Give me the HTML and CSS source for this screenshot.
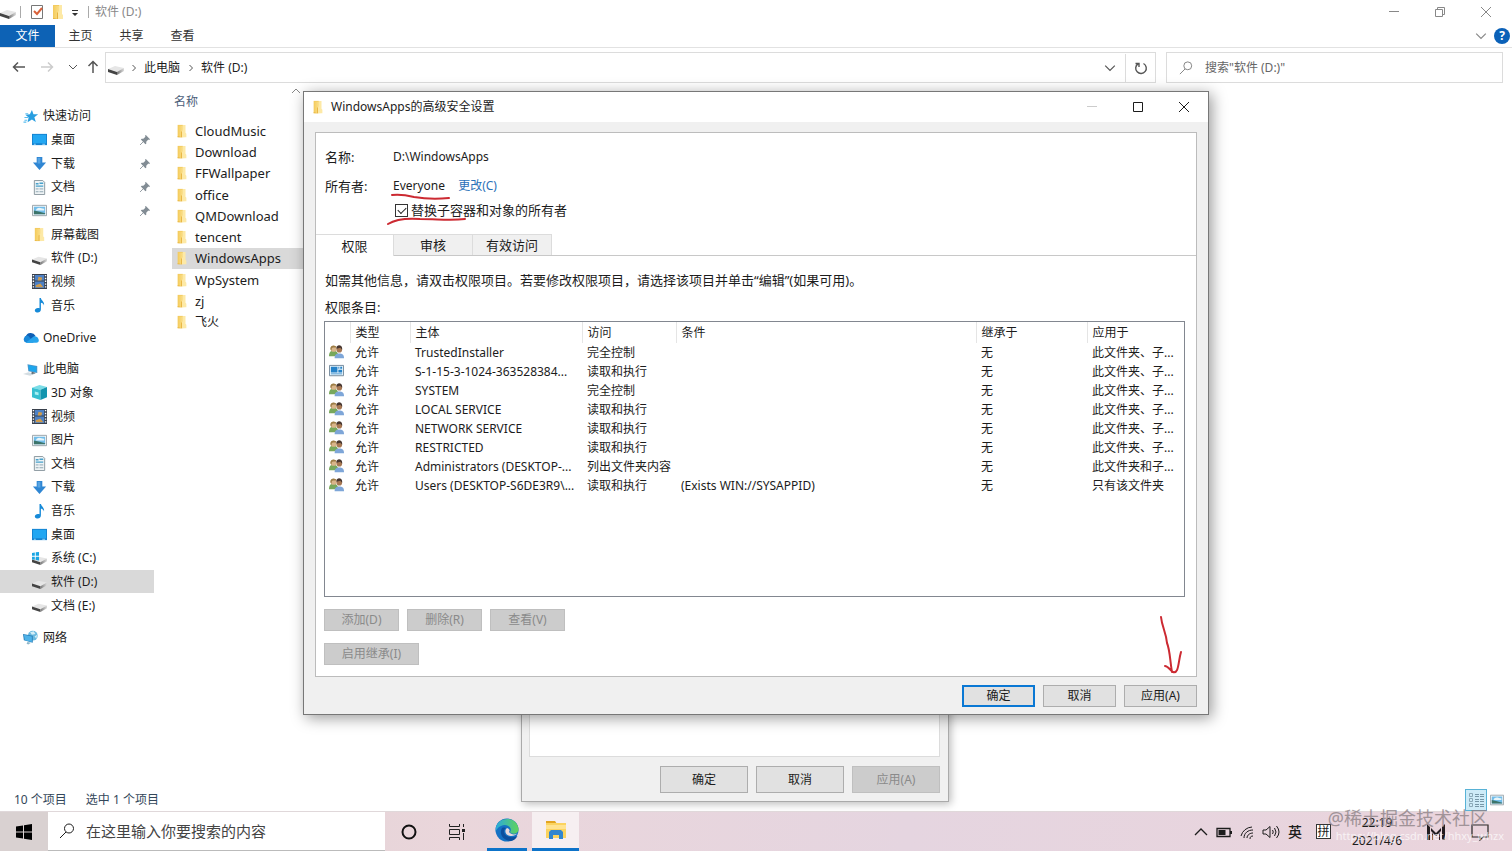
FILE: index.html
```html
<!DOCTYPE html>
<html lang="zh-CN">
<head>
<meta charset="utf-8">
<title>软件 (D:)</title>
<link rel="stylesheet" href="styles.css">
</head>
<body>
<svg class="sprite" aria-hidden="true">
  <defs>
    <linearGradient id="g-folder" x1="0" x2="1"><stop offset="0" stop-color="#f6cf62"/><stop offset="1" stop-color="#fbe49a"/></linearGradient>
    <linearGradient id="g-drive" x1="0" x2="1"><stop offset="0" stop-color="#777"/><stop offset="1" stop-color="#ddd"/></linearGradient>
    <linearGradient id="g-edge" x1="0" y1="0" x2="1" y2="0"><stop offset="0" stop-color="#2aa9dd"/><stop offset="1" stop-color="#5fd45a"/></linearGradient>
  </defs>
  <symbol id="folder" viewBox="0 0 16 16"><path fill="#f3cb60" d="M3 1h6v14H3z"/><path fill="url(#g-folder)" d="M4 2h7v13H4z"/><path fill="#fde9a6" d="M9 1h3v9l1 1v4H8V8l1-1z"/><path fill="#e6b23f" d="M3 14l5 1H3zM8 8v7H7V9z"/></symbol>
  <symbol id="drive" viewBox="0 0 16 16"><path fill="#e6e6e6" d="M0 9l7-3 9 2-6 4z"/><path fill="#444" d="M0 9l9 3v3l-9-3z"/><path fill="url(#g-drive)" d="M9 12l7-4v3l-7 4z"/></symbol>
  <symbol id="drivec" viewBox="0 0 16 16"><use href="#drive"/><path fill="#19a5e3" d="M0 2l3-.5V5H0zM4 1.300L7.500 1v4H4zM0 6h3v3.300L0 9zM4 6h3.500v4L4 9.500z"/></symbol>
  <symbol id="star" viewBox="0 0 16 16"><path fill="#289ee0" d="M9 1l1.600 4.500 5 .2-4 3.200 1.500 5L9 11.200 4.300 14l1.200-5L2 6l4.800-.3z"/><path stroke="#59bdf0" stroke-width="1.200" d="M1 9h4M1 12h3M0 14h3M2 5h3"/></symbol>
  <symbol id="desktop" viewBox="0 0 16 16"><path fill="#1583d0" d="M0 2h16v12H0z"/><path fill="#22a7f2" d="M1 3h14v9H1z"/><path fill="#9bd8fb" d="M2 12.500h2v1H2zM11 12.500h3v1h-3z"/></symbol>
  <symbol id="down" viewBox="0 0 16 16"><path fill="#2f86d3" d="M5 1h6v6h4l-7 8-7-8h4z"/><path fill="#57a4e3" d="M6 2h3v6H6z"/></symbol>
  <symbol id="doc" viewBox="0 0 16 16"><path fill="#eef3f5" stroke="#88959d" d="M2.500.5h9l2 2v13h-11z"/><path stroke="#48a2cc" stroke-width="1.500" d="M4 4h3M8 3.500h4M4 6.500h8"/><path stroke="#8da4b1" d="M4 9.500h3M8 9.500h4M4 12.500h3M8 12.500h4"/></symbol>
  <symbol id="picture" viewBox="0 0 16 16"><path fill="#f2f5f6" stroke="#97a2a9" d="M.5 2.500h15v11H.5z"/><path fill="#72bdea" d="M2 4h12v8H2z"/><path fill="#e7f5fa" d="M5 6c3-2 5 0 8 0v2H4z"/><path fill="#3c746a" d="M2 8l5 1 7 2v1H2z"/></symbol>
  <symbol id="video" viewBox="0 0 16 16"><path fill="#39404c" d="M0 0h16v16H0z"/><path fill="#4d81c6" d="M3 1h10v6H3zM3 8h10v7H3z"/><path fill="#cf9b4c" d="M7 3l4 1-1 3H6zM4 12l5-2 3 4H4z"/><path stroke="#fff" stroke-width="1.500" stroke-dasharray="1.500 1.500" d="M1.500 1v15M14.500 1v15"/></symbol>
  <symbol id="music" viewBox="0 0 16 16"><path fill="#168ad8" d="M8 0h1.500c.5 3 4 3.500 3.300 8-.5-2-1.700-3-3.300-3v7c0 5-6.500 4-6.500 1.200C3 11 6 10 8 11z"/></symbol>
  <symbol id="cloud" viewBox="0 0 18 14"><path fill="#0f5fb5" d="M3 6a6 6 0 0 1 11-1l-5 6H3z"/><path fill="#1987d8" d="M4 13a4 4 0 1 1 2-8l6 8z"/><path fill="#27a4ec" d="M3 13l9-7c4-2 9 6 3 7z"/></symbol>
  <symbol id="pc" viewBox="0 0 18 16"><path fill="#4e95c7" d="M5 2l11 2v8L6 10z"/><path fill="#1da6ed" d="M6 3l9 2v6l-8-2z"/><path fill="#d3dce1" d="M0 13l6-2 7 2-5 2z"/><path stroke="#81949f" d="M10 11v2l4-1"/></symbol>
  <symbol id="cube" viewBox="0 0 16 16"><path fill="#7bdde7" d="M0 3l8-3 8 2-7 3z"/><path fill="#36bfd0" d="M0 3l9 2v11l-9-3z"/><path fill="#1395ae" d="M9 5l7-3v11l-7 3z"/><path fill="#a8eff3" d="M3 7l4 1v3l-4-1z"/></symbol>
  <symbol id="network" viewBox="0 0 18 16"><circle cx="11" cy="6" r="5.500" fill="#69b9df"/><path fill="#d2edf7" d="M8 2l4-1 2 3-4 1zM13 7l3-2-1 4z"/><path fill="#257eb8" d="M0 4l11 2v8L1 11z"/><path fill="#4eb2e8" d="M1 5l9 2v6l-8-2z"/><path fill="#8eb7cb" d="M5 13l4 1-3 2-2-1z"/></symbol>
  <symbol id="pin" viewBox="0 0 12 12"><path fill="#828c94" d="M7 0l5 5-1 1-1-.5L7.500 8v2.500L6.500 11 1 5.500 2 4.500h2L6.500 2 6 1z"/><path stroke="#828c94" d="M0 12l4-4"/></symbol>
  <symbol id="users" viewBox="0 0 16 16"><path fill="#78a85c" d="M0 12c0-5 2-6 5-6s5 2 5 6z"/><circle cx="5" cy="4" r="3.300" fill="#d9b58a"/><path fill="#9d7e46" d="M1.500 4.500C1-.5 7-.5 8 2.500 6 3.500 4 1.500 3 3.500l-.5 3z"/><path fill="#7ea6d8" d="M6 14c0-4 2-5 5-5s5 1 5 5z"/><circle cx="11" cy="5" r="3" fill="#a87954"/><path fill="#46352e" d="M8 4c-1-5 7-5 6 1l-2-2z"/></symbol>
  <symbol id="app" viewBox="0 0 16 16"><path fill="#e8f4fb" stroke="#72889a" d="M.5 1.500h15v11H.5z"/><path fill="#2682c8" d="M2 3h7v6H2zM10 3h1v2h-1zM12 3h2v2h-2zM10 6h4v3h-4zM2 10h12v1H2z"/></symbol>
  <symbol id="search" viewBox="0 0 16 16"><circle cx="10" cy="5.500" r="4.500" fill="none" stroke="currentColor"/><path fill="none" stroke="currentColor" d="M7 9l-6 6"/></symbol>
  <symbol id="close" viewBox="0 0 12 12"><path fill="none" stroke="currentColor" d="M1 1l10 10M11 1L1 11"/></symbol>
  <symbol id="chev" viewBox="0 0 10 10"><path fill="none" stroke="currentColor" d="M1 3l4 4 4-4"/></symbol>
  <symbol id="right" viewBox="0 0 10 10"><path fill="none" stroke="#555" d="M3.500 2l3 3-3 3"/></symbol>
  <symbol id="arrow" viewBox="0 0 14 14"><path fill="none" stroke="currentColor" stroke-width="1.500" d="M13 7H2M6 2.500L1.500 7 6 11.500"/></symbol>
</svg>

<main class="explorer">
  <header class="titlebar">
    <svg class="i16"><use href="#drive"/></svg><span class="bar first"></span>
    <svg class="i16" viewBox="0 0 16 16"><path fill="#fff" stroke="#777" d="M2.500 1.500h11v13h-11z"/><path fill="none" stroke="#d9623b" stroke-width="2" d="M5 7l3 3 5-6"/></svg>
    <svg class="i16"><use href="#folder"/></svg>
    <svg class="i10" viewBox="0 0 10 10"><path fill="#333" d="M2 3h6v1H2zM2 6h6L5 9z"/></svg>
    <span class="bar"></span><span>软件 (D:)</span>
    <div class="controls">
      <button aria-label="最小化"><svg class="i10" viewBox="0 0 10 10"><path stroke="currentColor" d="M0 4.500h10"/></svg></button>
      <button aria-label="还原"><svg class="i10" viewBox="0 0 10 10"><path fill="none" stroke="currentColor" d="M.5 2.500h7v7h-7zM2.500 2.500v-2h7v7h-2"/></svg></button>
      <button aria-label="关闭"><svg class="i12"><use href="#close"/></svg></button>
    </div>
  </header>
  <nav class="ribbon">
    <button class="file">文件</button><button>主页</button><button>共享</button><button>查看</button>
    <div class="ribbon-end"><svg class="i12"><use href="#chev"/></svg><button class="help" aria-label="帮助">?</button></div>
  </nav>
  <div class="navbar">
    <div class="arrows">
      <button aria-label="后退"><svg class="i14"><use href="#arrow"/></svg></button>
      <button class="off" aria-label="前进"><svg class="i14 flip"><use href="#arrow"/></svg></button>
      <button aria-label="最近"><svg class="i10"><use href="#chev"/></svg></button>
      <button aria-label="向上"><svg class="i14 up"><use href="#arrow"/></svg></button>
    </div>
    <div class="address">
      <svg class="i16"><use href="#drive"/></svg><svg class="i10"><use href="#right"/></svg><span>此电脑</span><svg class="i10"><use href="#right"/></svg><span>软件 (D:)</span>
      <button class="drop" aria-label="历史"><svg class="i12"><use href="#chev"/></svg></button>
      <button class="refresh" aria-label="刷新"><svg class="i14" viewBox="0 0 14 14"><path fill="none" stroke="currentColor" stroke-width="1.400" d="M9.500 2.500a5.300 5.300 0 1 1-5.500.3M1.500 2.500h3.500V6"/></svg></button>
    </div>
    <label class="find"><svg class="i14"><use href="#search"/></svg><input type="text" aria-label="搜索" placeholder='搜索"软件 (D:)"'></label>
  </div>
  <div class="body">
    <aside class="tree">
      <ul class="g9">
        <li class="root"><svg><use href="#star"/></svg>快速访问</li>
        <li><svg><use href="#desktop"/></svg>桌面<svg class="pin"><use href="#pin"/></svg></li>
        <li><svg><use href="#down"/></svg>下载<svg class="pin"><use href="#pin"/></svg></li>
        <li><svg><use href="#doc"/></svg>文档<svg class="pin"><use href="#pin"/></svg></li>
        <li><svg><use href="#picture"/></svg>图片<svg class="pin"><use href="#pin"/></svg></li>
        <li><svg><use href="#folder"/></svg>屏幕截图</li>
        <li><svg><use href="#drive"/></svg>软件 (D:)</li>
        <li><svg><use href="#video"/></svg>视频</li>
        <li><svg><use href="#music"/></svg>音乐</li>
      </ul>
      <ul><li class="root"><svg><use href="#cloud"/></svg>OneDrive</li></ul>
      <ul class="g11">
        <li class="root"><svg><use href="#pc"/></svg>此电脑</li>
        <li><svg><use href="#cube"/></svg>3D 对象</li>
        <li><svg><use href="#video"/></svg>视频</li>
        <li><svg><use href="#picture"/></svg>图片</li>
        <li><svg><use href="#doc"/></svg>文档</li>
        <li><svg><use href="#down"/></svg>下载</li>
        <li><svg><use href="#music"/></svg>音乐</li>
        <li><svg><use href="#desktop"/></svg>桌面</li>
        <li><svg><use href="#drivec"/></svg>系统 (C:)</li>
        <li class="on"><svg><use href="#drive"/></svg>软件 (D:)</li>
        <li><svg><use href="#drive"/></svg>文档 (E:)</li>
      </ul>
      <ul><li class="root"><svg><use href="#network"/></svg>网络</li></ul>
    </aside>
    <section class="files">
      <div class="cols"><span>名称</span><svg class="i10 sort"><use href="#chev"/></svg></div>
      <ul>
        <li><svg><use href="#folder"/></svg>CloudMusic</li>
        <li><svg><use href="#folder"/></svg>Download</li>
        <li><svg><use href="#folder"/></svg>FFWallpaper</li>
        <li><svg><use href="#folder"/></svg>office</li>
        <li><svg><use href="#folder"/></svg>QMDownload</li>
        <li><svg><use href="#folder"/></svg>tencent</li>
        <li class="on"><svg><use href="#folder"/></svg>WindowsApps</li>
        <li><svg><use href="#folder"/></svg>WpSystem</li>
        <li><svg><use href="#folder"/></svg>zj</li>
        <li><svg><use href="#folder"/></svg>飞火</li>
      </ul>
    </section>
  </div>
  <footer class="status">
    <span>10 个项目</span><span>选中 1 个项目</span>
    <div class="views">
      <button class="on" aria-label="详细信息"><svg class="i16" viewBox="0 0 16 16"><path fill="none" stroke="#8aa9b8" d="M1.500 1.500h3v3h-3zM1.500 6.500h3v3h-3zM1.500 11.500h3v3h-3z"/><path stroke="#7797a8" stroke-dasharray="4 1" d="M7 2.500h9M7 4.500h9M7 7.500h9M7 9.500h9M7 12.500h9M7 14.500h9"/></svg></button>
      <button aria-label="缩略图"><svg class="i14"><use href="#picture"/></svg></button>
    </div>
  </footer>
</main>

<section class="props">
  <div class="sheet"></div>
  <div class="actions"><button>确定</button><button>取消</button><button disabled>应用(A)</button></div>
</section>

<section class="dialog" role="dialog" aria-labelledby="dlg-title">
  <header>
    <svg class="i14"><use href="#folder"/></svg><h1 id="dlg-title">WindowsApps的高级安全设置</h1>
    <div class="controls">
      <button class="off" aria-label="最小化"><svg class="i10" viewBox="0 0 10 10"><path stroke="currentColor" d="M0 4.500h10"/></svg></button>
      <button aria-label="最大化"><svg class="i10" viewBox="0 0 10 10"><path fill="none" stroke="currentColor" d="M.5.5h9v9h-9z"/></svg></button>
      <button aria-label="关闭"><svg class="i12"><use href="#close"/></svg></button>
    </div>
  </header>
  <div class="panel">
    <dl class="info">
      <dt>名称:</dt><dd>D:\WindowsApps</dd>
      <dt>所有者:</dt><dd>Everyone <a href="#">更改(C)</a></dd>
    </dl>
    <label class="check"><input type="checkbox" checked><span>替换子容器和对象的所有者</span></label>
    <div class="tabs" role="tablist"><button class="on" role="tab">权限</button><button role="tab">审核</button><button role="tab">有效访问</button></div>
    <div class="page">
      <p>如需其他信息，请双击权限项目。若要修改权限项目，请选择该项目并单击“编辑”(如果可用)。</p>
      <p class="lead">权限条目:</p>
      <div class="list">
        <table>
          <colgroup><col class="c0"><col class="c1"><col class="c2"><col class="c3"><col class="c4"><col class="c5"><col class="c6"></colgroup>
          <thead><tr><th></th><th>类型</th><th>主体</th><th>访问</th><th>条件</th><th>继承于</th><th>应用于</th></tr></thead>
          <tbody>
            <tr><td><svg><use href="#users"/></svg></td><td>允许</td><td>TrustedInstaller</td><td>完全控制</td><td></td><td>无</td><td>此文件夹、子...</td></tr>
            <tr><td><svg><use href="#app"/></svg></td><td>允许</td><td>S-1-15-3-1024-363528384...</td><td>读取和执行</td><td></td><td>无</td><td>此文件夹、子...</td></tr>
            <tr><td><svg><use href="#users"/></svg></td><td>允许</td><td>SYSTEM</td><td>完全控制</td><td></td><td>无</td><td>此文件夹、子...</td></tr>
            <tr><td><svg><use href="#users"/></svg></td><td>允许</td><td>LOCAL SERVICE</td><td>读取和执行</td><td></td><td>无</td><td>此文件夹、子...</td></tr>
            <tr><td><svg><use href="#users"/></svg></td><td>允许</td><td>NETWORK SERVICE</td><td>读取和执行</td><td></td><td>无</td><td>此文件夹、子...</td></tr>
            <tr><td><svg><use href="#users"/></svg></td><td>允许</td><td>RESTRICTED</td><td>读取和执行</td><td></td><td>无</td><td>此文件夹、子...</td></tr>
            <tr><td><svg><use href="#users"/></svg></td><td>允许</td><td>Administrators (DESKTOP-...</td><td>列出文件夹内容</td><td></td><td>无</td><td>此文件夹和子...</td></tr>
            <tr><td><svg><use href="#users"/></svg></td><td>允许</td><td>Users (DESKTOP-S6DE3R9\...</td><td>读取和执行</td><td>(Exists WIN://SYSAPPID)</td><td>无</td><td>只有该文件夹</td></tr>
          </tbody>
        </table>
      </div>
      <div class="row"><button disabled>添加(D)</button><button disabled>删除(R)</button><button disabled>查看(V)</button></div>
      <div class="row"><button class="wide" disabled>启用继承(I)</button></div>
    </div>
  </div>
  <div class="actions"><button class="primary">确定</button><button>取消</button><button>应用(A)</button></div>
  <svg class="ink marks" viewBox="0 0 84 34"><path d="M5 3c8-1 14 0 22 2 12 2 24 2 35 1M1 32c8-5 18-6 32-5 18 0 30 2 45 0"/></svg>
  <svg class="ink pointer" viewBox="0 0 26 60"><path d="M2 2c1 10 5 15 6 26 3 7 3 18 5 29M6 51c3 0 5 4 8 6 6 2 5-10 8-20"/></svg>
</section>

<footer class="taskbar">
  <button class="start" aria-label="开始"><svg class="i16" viewBox="0 0 16 16"><path d="M0 2.500L7 1.500V7.500H0zM8 1.300L16 0V7.500H8zM0 8.500h7v6L0 13.500zM8 8.500h8V16l-8-1.300z"/></svg></button>
  <label class="ask"><svg class="i16"><use href="#search"/></svg><input type="text" aria-label="任务栏搜索" placeholder="在这里输入你要搜索的内容"></label>
  <button class="task" aria-label="Cortana"><svg class="i16" viewBox="0 0 16 16"><circle cx="8" cy="8" r="6.500" fill="none" stroke="#111" stroke-width="2"/></svg></button>
  <button class="task" aria-label="任务视图"><svg class="i16" viewBox="0 0 16 16"><path fill="none" stroke="#222" d="M.5 0v2.500h10V0M.5 5.500h10v5H.5zM.5 16v-2.500h10V16M14.500 0v3M14.500 9v7"/><path fill="#222" d="M13 5h3v3h-3z"/></svg></button>
  <button class="task run" aria-label="Edge"><svg class="i24" viewBox="0 0 24 24"><circle cx="12" cy="12" r="11.500" fill="#1471c4"/><path fill="url(#g-edge)" d="M1 9C4-2 22-2 23.500 11c.5 5-7 6-8.500 3 3-4-3-9-9-6-3 1-5 4-5.500 6z"/><path fill="#0d4f9e" d="M7 10c-3 5 0 12 8 13 3 0 6-2 7.500-5C15 21 9 18 9 13c0-2 2-3 2-3s-2-1-4 0z"/><path fill="#eadadd" d="M12 10c-3 2-2 8 4 8 3 0 5-1 7-3-2 2-7 2-9-1 1-1 1-3-2-4z"/></svg></button>
  <button class="task run cur" aria-label="文件资源管理器"><svg class="i24" viewBox="0 0 24 24"><path fill="#e3a520" d="M2 3h9l2 3H2z"/><path fill="#fbd35f" d="M2 5h20v15H2z"/><path fill="#ffe390" d="M2 7h20v4H2z"/><path fill="#3286cf" d="M5 21v-7l2-2h10l2 2v7h-4v-4H9v4z"/></svg></button>
  <div class="tray">
    <svg class="i14" viewBox="0 0 14 14"><path fill="none" stroke="currentColor" stroke-width="1.300" d="M1 10l6-6 6 6"/></svg>
    <svg class="i16" viewBox="0 0 16 16"><path fill="none" stroke="currentColor" stroke-width="1.300" d="M1 4.500h13v8H1z"/><path fill="currentColor" d="M2.500 6h7v5h-7zM14 7h2v3h-2z"/></svg>
    <svg class="i14" viewBox="0 0 14 14"><path fill="none" stroke="currentColor" d="M1 11A12 12 0 0 1 12 2M4 13c0-5 4-8 9-8M7 13c0-3 3-5 6-5M10 14c0-2 1-3 3-3"/></svg>
    <svg class="i18" viewBox="0 0 18 16"><path fill="none" stroke="currentColor" d="M1 6h3l4-3.500v11L4 10H1zM10.500 6q1.500 2 0 4M12.500 4q3 4 0 8M14.500 2q5 6 0 12"/></svg>
    <span class="lang">英</span><span class="ime">拼</span>
    <span class="clock"><time>22:19</time><time>2021/4/6</time></span>
    <svg class="i18" viewBox="0 0 18 16"><path fill="#221d20" d="M0 0l3 3v13H0zM4 4l5 5 5-5v3l-5 5-5-5zM18 0l-3 3v13h3zM5 9l1 1v6H5zM13 9l-1 1v6h1z"/></svg>
    <svg class="i18 note" viewBox="0 0 18 18"><path fill="none" stroke="#222" stroke-width="1.200" d="M1 2h16v12h-5l-3 3v-3H1z"/></svg>
  </div>
  <span class="mark">@稀土掘金技术社区</span>
  <span class="mark2">https://blog.csdn.net/hhxy_whzx</span>
</footer>
</body>
</html>
```
FILE: styles.css
```css
* { box-sizing: border-box; }
html, body { margin: 0; height: 100%; }
body {
  display: flex;
  flex-direction: column;
  position: relative;
  overflow: hidden;
  background: #fff;
  color: #1c1c1c;
  font: 12px/20px "Noto Sans", "Noto Sans CJK SC", sans-serif;
}
button, input { font: inherit; color: inherit; }
button { padding: 0; border: 0; background: none; }
ul, dl, dd, p, h1 { margin: 0; padding: 0; list-style: none; font-weight: 400; }
svg { display: block; flex: none; }
.sprite { position: absolute; width: 0; height: 0; }
.i10 { width: 10px; height: 10px; }
.i12 { width: 12px; height: 12px; }
.i14 { width: 14px; height: 14px; }
.i16 { width: 16px; height: 16px; }
.i18 { width: 18px; height: 16px; }
.i24 { width: 24px; height: 24px; }

.explorer { flex: 1; display: flex; flex-direction: column; min-height: 0; }
.titlebar { display: flex; align-items: center; height: 24px; gap: 4px; color: #888; }
.bar { width: 1px; height: 12px; margin: 0 2px 0 4px; background: #aaa; }
.bar.first { margin: 0 4px 0 0; }
.titlebar > .i16 + .i16 { margin-left: 1px; }
.controls { display: flex; margin-left: auto; }
.controls button { display: grid; place-items: center; width: 46px; height: 24px; }
.titlebar .controls { margin-right: 3px; }
.ribbon { display: flex; align-items: center; height: 24px; border-bottom: 1px solid #e2e2e2; color: #333; }
.ribbon > button { width: 51px; height: 22px; }
.ribbon > .file { width: 55px; background: #0d62b5; color: #fff; }
.ribbon-end { display: flex; align-items: center; gap: 7px; margin-left: auto; padding-right: 2px; color: #888; }
.help { width: 16px; height: 16px; border-radius: 50%; background: #0b61b8; color: #fff; font-weight: 700; line-height: 16px; }
.navbar { display: flex; align-items: center; gap: 10px; height: 38px; padding-right: 9px; }
.arrows { display: flex; align-items: center; width: 95px; gap: 14px; padding-left: 12px; color: #555; }
.arrows button:nth-child(3) { margin-right: -6px; }
.arrows .off { color: #ccc; }
.flip { transform: rotate(180deg); }
.up { transform: rotate(90deg); }
.address { flex: 1; display: flex; align-items: center; height: 31px; gap: 5px; padding: 1px 0 0 2px; border: 1px solid #dcdcdc; }
.address > .i10 { margin-left: 1px; }
.address > .i16 + .i10 { margin-left: 0; }
.address button { display: grid; place-items: center; height: 100%; color: #555; }
.drop { width: 30px; margin-left: auto; }
.address .refresh { width: 30px; margin-left: -5px; border-left: 1px solid #dcdcdc; }
.navbar .arrows { margin-right: -10px; width: 105px; }
.find { display: flex; align-items: center; width: 337px; height: 31px; gap: 12px; padding: 1px 0 0 12px; border: 1px solid #dcdcdc; color: #777; }
.find input, .ask input { flex: 1; min-width: 0; padding: 0; border: 0; outline: 0; background: none; }
.find input::placeholder { color: #666; opacity: 1; }

.body { flex: 1; display: flex; min-height: 0; }
.tree { width: 154px; padding-top: 18px; }
.tree ul { display: grid; grid-auto-rows: 1fr; height: 24px; margin-bottom: 8px; }
.tree .g9 { height: 213px; }
.tree .g11 { height: 260px; }
.tree li { display: flex; align-items: center; gap: 4px; padding: 1px 0 0 32px; }
.tree li.root { padding-left: 23px; }
.tree li svg { width: 15px; height: 15px; }
.tree li.root svg { width: 16px; }
.tree li svg.pin { width: 10px; height: 10px; margin: 0 4px 0 auto; }
.on { background: #d9d9d9; }
.files { flex: 1; margin-left: 18px; }
.cols { position: relative; display: flex; width: 132px; height: 34px; padding: 6px 2px; color: #4c607a; }
.sort { position: absolute; left: 119px; top: 0; transform: rotate(180deg); color: #888; }
.files ul { display: grid; grid-auto-rows: 1fr; height: 213px; }
.files li { display: flex; align-items: center; gap: 6px; width: 300px; padding-left: 3px; font-size: 13px; }
.files li:last-child { font-size: 12px; }
.files li svg { width: 14px; height: 14px; }
.status { display: flex; align-items: center; height: 22px; gap: 19px; padding: 0 8px 0 14px; color: #33475a; }
.views { display: flex; align-items: center; gap: 3px; margin-left: auto; }
.views button { display: grid; place-items: center; height: 22px; }
.views .on { width: 22px; background: #cdebf8; border: 1px solid #58b2d6; }

.props {
  position: absolute; left: 521px; top: 600px; width: 428px;
  padding: 0 8px 8px 7px; background: #f0f0f0; border: 1px solid #aaa; box-shadow: 2px 2px 8px #0004;
}
.sheet { height: 156px; background: #fff; border: 1px solid #dcdcdc; }
.actions { display: flex; justify-content: flex-end; gap: 8px; }
.actions button { height: 22px; width: 73px; background: #e1e1e1; border: 1px solid #adadad; font-size: 12px; line-height: 18px; }
.props .actions { margin-top: 9px; }
.props .actions button { width: 88px; height: 27px; font-size: 12px; }
.actions button:disabled, .row button:disabled { background: #ccc; border: 1px solid #bfbfbf; color: #8a8a8a; }

.dialog {
  position: absolute; left: 303px; top: 91px; width: 906px;
  background: #f0f0f0; border: 1px solid #777; box-shadow: 3px 3px 14px #0006;
  font-size: 13px;
}
.dialog > header { display: flex; align-items: center; height: 30px; gap: 6px; padding: 0 1px 0 7px; background: #fff; }
.dialog h1 { font-size: 12px; }
.dialog .off { color: #ccc; }
.panel { margin: 10px 11px 0; background: #fff; border: 1px solid #bcbcbc; }
.info { display: grid; grid-template-columns: 68px 1fr; row-gap: 9px; padding: 14px 0 0 9px; }
.info dd { font-size: 12px; }
.info a { margin-left: 10px; color: #2b72b9; text-decoration: none; }
.check { display: flex; align-items: center; gap: 3px; height: 20px; margin: 4px 0 0 79px; width: max-content; }
.check input { appearance: none; position: relative; width: 13px; height: 13px; margin: 0; border: 1px solid #333; background: #fff; }
.check input:checked::after { content: ""; position: absolute; left: 2px; top: 2px; width: 7px; height: 4px; border: solid #222; border-width: 0 0 1px 1px; transform: rotate(-45deg); }
.tabs { display: flex; height: 22px; margin-top: 14px; border-bottom: 1px solid #c8c8c8; }
.tabs button { width: 79px; height: 21px; background: #f0f0f0; border: 1px solid #dcdcdc; border-bottom: 0; line-height: 18px; }
.tabs button + button { border-left: 0; }
.tabs .on { width: 78px; height: 22px; background: #fff; border-left: 0; }
.page { padding: 14px 11px 11px 8px; }
.page p { padding-left: 1px; }
.page .lead { margin-top: 7px; }
.list { height: 276px; margin-top: 4px; border: 1px solid #828790; }
table { width: 100%; border-collapse: collapse; table-layout: fixed; font-size: 12px; line-height: 19px; }
th, td { height: 19px; padding: 0 0 0 5px; text-align: left; font-weight: 400; white-space: nowrap; overflow: hidden; }
thead th { height: 21px; border-right: 1px solid #e5e5e5; }
thead th:last-child { border: 0; }
td:first-child { padding-left: 4px; }
td svg { width: 15px; height: 15px; }
.c0 { width: 25px; } .c1 { width: 60px; } .c2 { width: 172px; } .c3 { width: 94px; }
.c5 { width: 111px; } .c6 { width: 97px; }
.row { display: flex; gap: 8px; margin-top: 12px; }
.row button { width: 75px; height: 22px; font-size: 12px; line-height: 18px; }
.row .wide { width: 95px; }
.dialog > .actions { padding: 8px 11px 7px; }
.dialog .primary { border: 2px solid #0a78d4; }
.ink { position: absolute; fill: none; stroke: #cc2a32; stroke-width: 2; stroke-linecap: round; }
.marks { left: 83px; top: 100px; width: 84px; height: 34px; }
.pointer { left: 855px; top: 523px; width: 26px; height: 60px; }

.taskbar {
  position: relative; display: flex; height: 40px;
  background: linear-gradient(90deg, #dcd1d2, #ead6db 30%, #e5d5e0 60%, #ead4dc);
  border-top: 1px solid #e0d8da;
}
.start { display: grid; place-items: center; width: 48px; background: #d9d1d1; }
.ask { display: flex; align-items: center; gap: 11px; width: 337px; padding-left: 11px; background: #fff; border-bottom: 1px solid #bbb; }
.ask input { font-size: 15px; }
.ask input::placeholder { color: #444; opacity: 1; }
.task { display: grid; place-items: center; width: 48px; }
.task.run { width: 40px; margin-left: 6px; border-bottom: 3px solid #0d73c9; }
.task.cur { width: 47px; margin-left: 5px; background: #f6eff1; }
.tray { display: flex; align-items: center; gap: 8px; margin-left: auto; padding-right: 23px; }
.lang { font-size: 14px; font-weight: 500; }
.ime { width: 15px; height: 15px; margin-left: 6px; border: 1px solid #333; background: #fff; font-size: 12px; line-height: 13px; text-align: center; }
.clock { display: grid; width: 72px; margin-left: 2px; line-height: 18px; text-align: center; }
.tray .clock + svg { margin-left: 6px; }
.note { margin-left: 18px; height: 18px; }
.mark, .mark2 { position: absolute; white-space: nowrap; color: #fff; }
.mark { right: 24px; top: -6px; font-size: 18px; line-height: 24px; color: #8e8388; opacity: .8; }
.mark2 { right: 8px; top: 14px; font-size: 11px; opacity: .7; }
```
